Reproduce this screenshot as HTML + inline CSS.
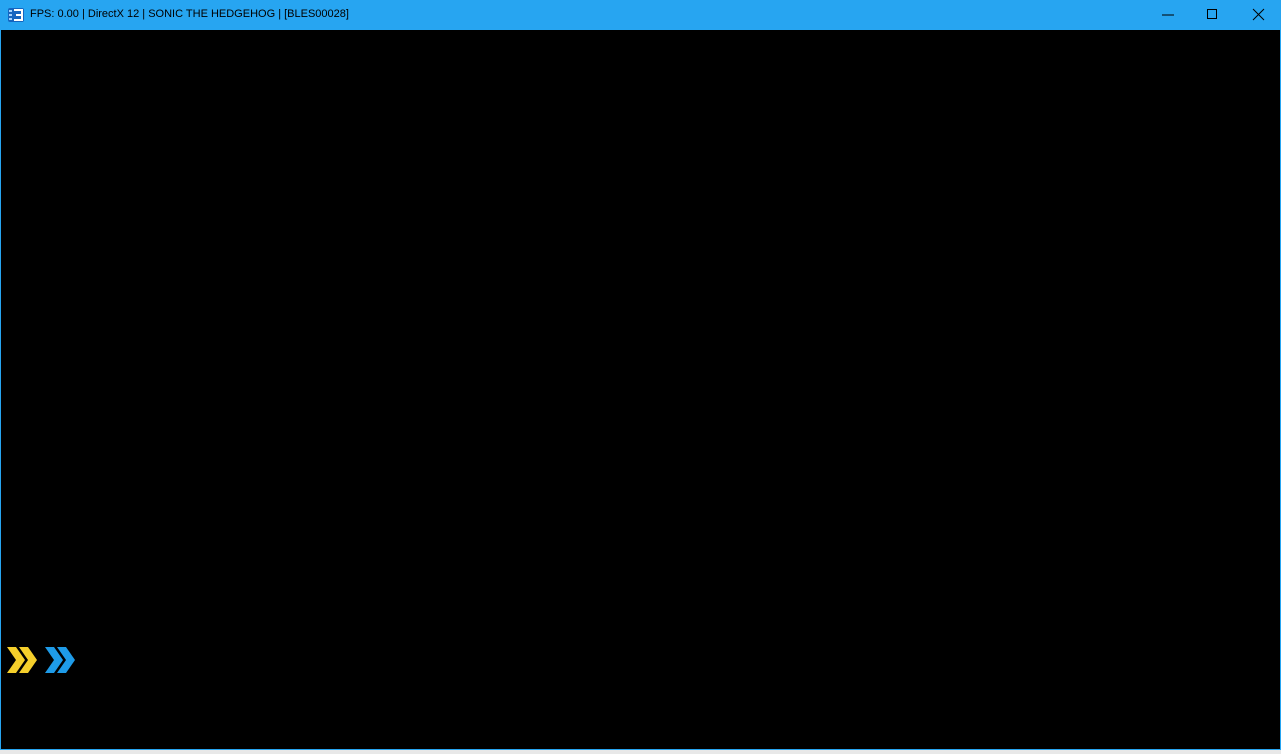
<!DOCTYPE html>
<html><head><style>
html,body{margin:0;padding:0;width:1281px;height:754px;overflow:hidden;background:#e8e8e8;font-family:"Liberation Sans",sans-serif}
#tb{position:absolute;left:0;top:0;width:1281px;height:30px;background:#27a5f1}
#tt{position:absolute;left:30px;top:8px;font-size:11px;color:#000;white-space:nowrap}
#win{position:absolute;left:0;top:30px;width:1279px;height:719px;background:#000;border-left:1px solid #27a5f1;border-right:1px solid #27a5f1;border-bottom:1px solid #27a5f1}
</style></head><body>
<div id="tb">
<svg style="position:absolute;left:8px;top:8px" width="16" height="14"><rect x="0" y="0" width="16" height="14" rx="2" fill="#1565c0"/><rect x="1" y="2" width="3" height="2" fill="#9fd0ff"/><rect x="1" y="6" width="3" height="2" fill="#9fd0ff"/><rect x="1" y="10" width="3" height="2" fill="#9fd0ff"/><path d="M6 2H14V12H6M8 7H14" stroke="#fff" stroke-width="2" fill="none"/></svg>
<div id="tt">FPS: 0.00 | DirectX 12 | SONIC THE HEDGEHOG | [BLES00028]</div>
<svg style="position:absolute;left:1160px;top:8px" width="110" height="14">
<path d="M2 7H14" stroke="#000" stroke-width="1"/>
<rect x="47.5" y="1.5" width="9" height="9" fill="none" stroke="#000"/>
<path d="M93 1L104 12M104 1L93 12" stroke="#000" stroke-width="1"/>
</svg>
</div>
<div id="win">
<svg style="position:absolute;left:5px;top:616px" width="72" height="30">
<g fill="#f5cf2b"><path d="M1 1H10L19 14H10Z"/><path d="M1 27H10L19 14H10Z"/><path d="M13 1H22L31 14H22Z"/><path d="M13 27H22L31 14H22Z"/></g>
<g fill="#1e9be8"><path d="M39 1H48L57 14H48Z"/><path d="M39 27H48L57 14H48Z"/><path d="M51 1H60L69 14H60Z"/><path d="M51 27H60L69 14H60Z"/></g>
</svg>
</div>
</body></html>
